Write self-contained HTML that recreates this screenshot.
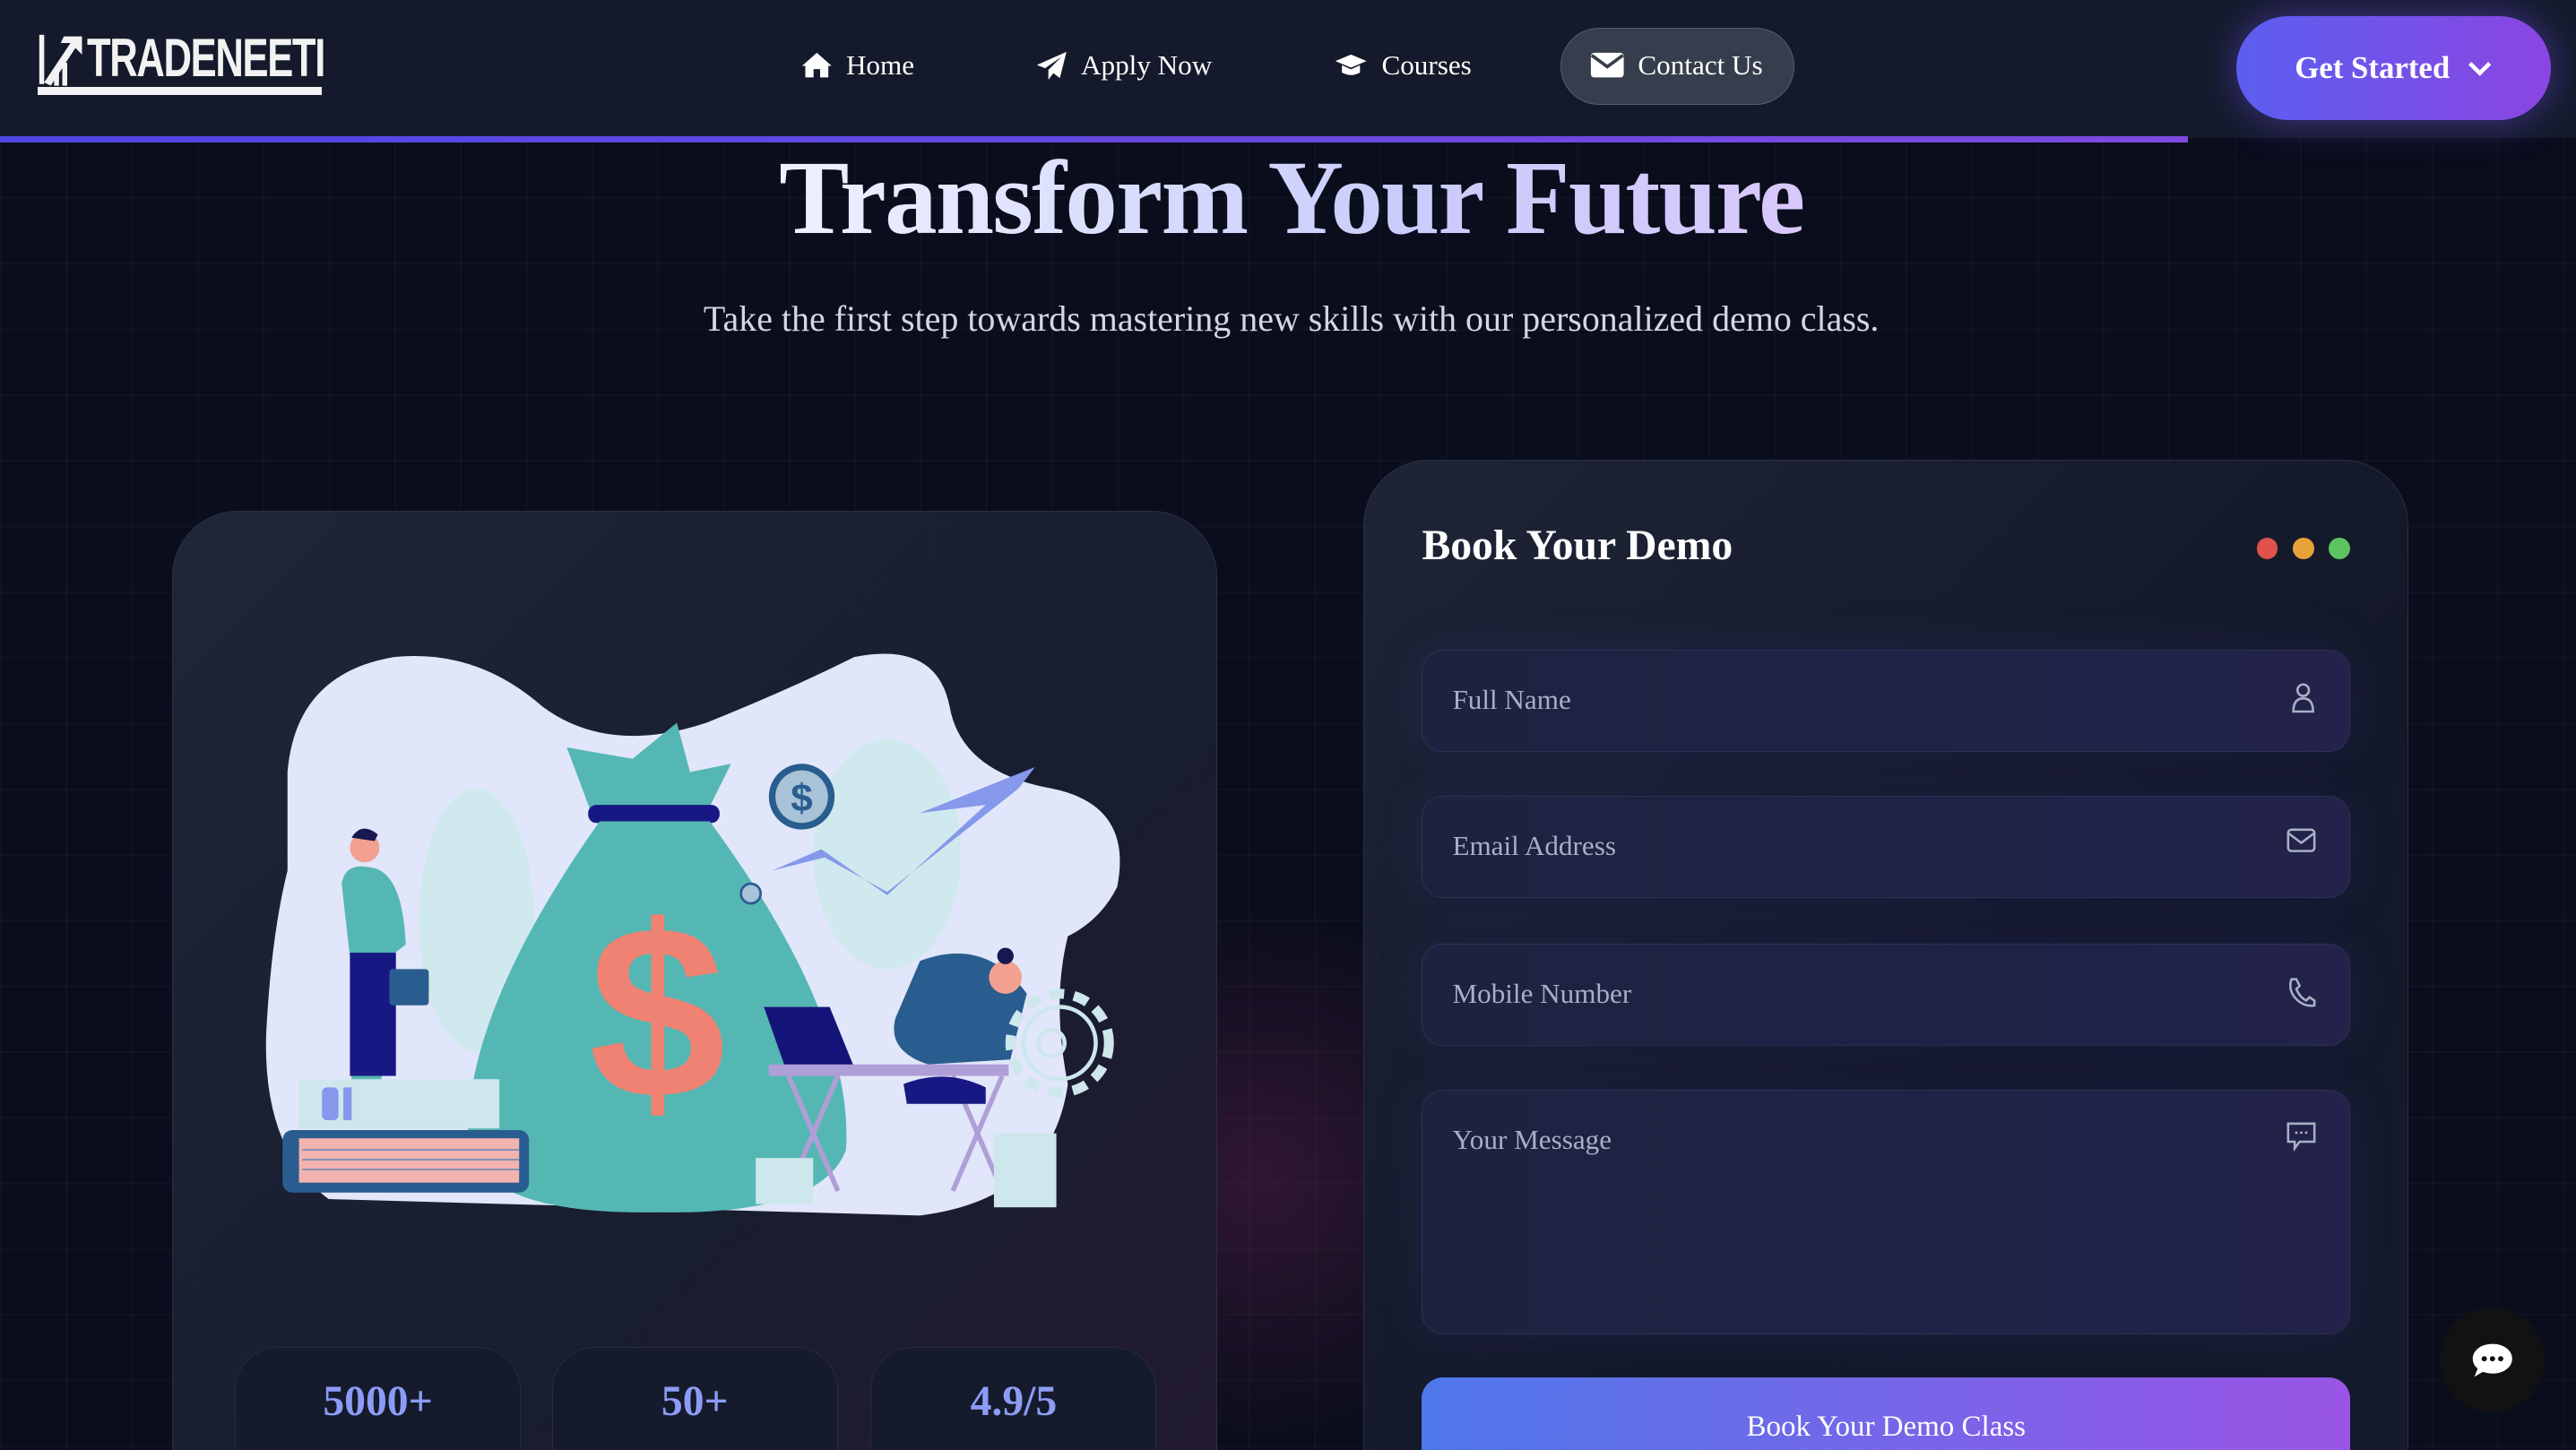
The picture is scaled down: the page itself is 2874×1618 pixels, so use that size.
<!DOCTYPE html>
<html><head><meta charset="utf-8">
<style>
html{margin:0;padding:0;width:2874px;height:1618px;overflow:hidden;}
body{margin:0;padding:0;width:1568px;height:883px;overflow:hidden;zoom:1.83291;background:#0a0d1c;font-family:"Liberation Serif",serif;position:relative;}
.grid{position:absolute;inset:0;background-image:linear-gradient(rgba(255,255,255,0.025) 1px,transparent 1px),linear-gradient(90deg,rgba(255,255,255,0.025) 1px,transparent 1px);background-size:40px 40px;}
.glow{position:absolute;left:600px;top:550px;width:333px;height:333px;border-radius:50%;background:radial-gradient(circle,rgba(120,40,90,0.35),transparent 70%);}
nav{position:absolute;left:0;top:0;width:1568px;height:84px;background:#141a2b;}
.bar{position:absolute;left:0;top:83px;width:1332px;height:4px;background:linear-gradient(90deg,#4f46e5,#7c4ae0);}
.logo{position:absolute;left:23px;top:20px;width:174px;height:38px;}
.logo span{position:absolute;left:30px;top:-4px;color:#f2f2f2;font-family:"Liberation Sans",sans-serif;font-weight:bold;font-size:33px;letter-spacing:-1px;transform:scaleX(0.72);transform-origin:left;}
.nv{position:absolute;top:30px;color:#fff;font-size:17px;display:flex;align-items:center;gap:8px;}
.pill{position:absolute;left:950px;top:17px;width:142px;height:47px;border-radius:24px;background:#363d4c;border:1px solid #565d6c;box-sizing:border-box;}
.gs{position:absolute;left:1361px;top:10px;width:192px;height:63px;border-radius:32px;background:linear-gradient(90deg,#5b5ff0,#8b45e2);color:#fff;font-weight:bold;font-size:19px;display:flex;align-items:center;justify-content:center;gap:10px;box-shadow:0 0 24px rgba(110,80,240,0.5);}
h1{position:absolute;left:0;width:1572px;top:84px;margin:0;text-align:center;font-size:64px;font-weight:bold;letter-spacing:-1px;}
h1 span{background:linear-gradient(90deg,#eef1ff,#c9cdfb 60%,#d8c8fb);-webkit-background-clip:text;color:transparent;}
.sub{position:absolute;left:0;width:1572px;top:181px;text-align:center;color:#d4d7e2;font-size:21.8px;}
.lc{position:absolute;left:105px;top:311px;width:636px;height:572px;border-radius:40px 40px 0 0;background:linear-gradient(135deg,#1f2638,#181d30 60%,#221a33);border:1px solid #2a3044;border-bottom:none;box-sizing:border-box;}
.st{position:absolute;top:820px;width:174px;height:63px;border-radius:26px 26px 0 0;background:#151b2c;border:1px solid #262c3d;border-bottom:none;box-sizing:border-box;text-align:center;color:#8c9cf6;font-weight:bold;font-size:26px;padding-top:18px;}
.rc{position:absolute;left:830px;top:280px;width:636px;height:603px;border-radius:40px 40px 0 0;background:linear-gradient(135deg,#1e2536,#131829 60%,#141a2c);border:1px solid #2a3044;border-bottom:none;box-sizing:border-box;overflow:hidden;}
.rc h2{position:absolute;left:35px;top:37px;margin:0;color:#fff;font-size:26px;font-weight:bold;}
.dot{position:absolute;top:47px;width:13px;height:13px;border-radius:50%;}
.in{position:absolute;left:35px;width:565px;height:62px;border-radius:13px;background:linear-gradient(90deg,#1c2340,#22224a);border:1px solid #2c3352;box-sizing:border-box;color:#a8b0c4;font-size:17px;padding:20px 0 0 18px;box-shadow:0 0 30px rgba(80,70,200,0.15);}
.in svg{position:absolute;right:20px;top:19px;}
.btn{position:absolute;left:35px;top:558px;width:565px;height:60px;border-radius:13px;background:linear-gradient(90deg,#4f78ea,#9a55e6);color:#fff;font-size:18px;text-align:center;padding-top:20px;box-sizing:border-box;}
.chat{position:absolute;left:1485px;top:796px;width:64px;height:64px;border-radius:50%;background:#121212;}
</style></head><body>
<div class="grid"></div><div class="glow"></div>
<nav>
<div class="logo"><svg width="30" height="38" viewBox="0 0 30 38"><rect x="1" y="1" width="3" height="30" fill="#f2f2f2"/><path d="M4 30 L20 6 L14 6 L16 2 L27 2 L27 13 L23 9 L8 32 Z" fill="#f2f2f2"/><rect x="10" y="22" width="3" height="10" fill="#f2f2f2"/><rect x="15" y="18" width="3" height="14" fill="#f2f2f2"/></svg><span>TRADENEETI</span><div style="position:absolute;left:0;top:33px;width:173px;height:5px;background:#f2f2f2"></div></div>
<div class="nv" style="left:487px"><svg width="20" height="17" viewBox="0 0 20 17"><path d="M10 1 L1 9 L3 9 L3 16 L8 16 L8 11 L12 11 L12 16 L17 16 L17 9 L19 9 Z" fill="#fff"/></svg>Home</div>
<div class="nv" style="left:630px"><svg width="20" height="19" viewBox="0 0 20 19"><path d="M19 1 L1 9 L6 11 L16 4 L8 12 L8 18 L11 14 L15 17 Z" fill="#fff"/></svg>Apply Now</div>
<div class="nv" style="left:812px"><svg width="21" height="15" viewBox="0 0 21 15"><path d="M10.5 1 L20 5 L10.5 9 L1 5 Z M5 7.5 L5 12 Q10.5 15 16 12 L16 7.5 L10.5 10 Z" fill="#fff"/></svg>Courses</div>
<div class="pill"></div>
<div class="nv" style="left:968px"><svg width="21" height="16" viewBox="0 0 21 16"><rect x="0.5" y="0.5" width="20" height="15" rx="2" fill="#fff"/><path d="M1 2 L10.5 9 L20 2" stroke="#363d4c" stroke-width="2" fill="none"/></svg>Contact Us</div>
<div class="gs">Get Started <svg width="16" height="10" viewBox="0 0 16 10"><path d="M2 2 L8 8 L14 2" stroke="#fff" stroke-width="2.5" fill="none"/></svg></div>
</nav>
<div class="bar"></div>
<h1><span>Transform Your Future</span></h1>
<div class="sub">Take the first step towards mastering new skills with our personalized demo class.</div>

<div class="lc"></div>
<svg style="position:absolute;left:0;top:0" width="1568" height="883">
<path d="M175 470 Q180 410 240 400 Q290 395 330 430 Q370 460 430 440 Q480 420 520 400 Q570 390 578 430 Q585 470 640 480 Q690 490 680 540 Q670 560 650 570 Q640 610 650 660 Q640 730 560 740 L200 730 Q160 700 162 630 Q165 570 175 530 Z" fill="#e1e6fa"/>
<ellipse cx="290" cy="560" rx="35" ry="80" fill="#d0e9ee"/>
<ellipse cx="540" cy="520" rx="45" ry="70" fill="#d0e9ee"/>
<path d="M345 455 L385 462 L412 440 L420 470 L445 465 L430 495 L360 495 Z" fill="#55b7b3"/>
<rect x="358" y="490" width="80" height="11" rx="5" fill="#181884"/>
<path d="M365 500 L432 500 Q520 620 515 700 Q500 740 400 738 Q300 740 285 700 Q280 620 365 500 Z" fill="#55b7b3"/>
<text x="400" y="668" text-anchor="middle" font-family="Liberation Sans,sans-serif" font-weight="bold" font-size="150" fill="#ef8272">$</text>
<circle cx="488" cy="485" r="20" fill="#2a5d8f"/><circle cx="488" cy="485" r="16" fill="#a8c2d8"/>
<text x="488" y="494" text-anchor="middle" font-family="Liberation Sans,sans-serif" font-weight="bold" font-size="24" fill="#2a5d8f">$</text>
<circle cx="457" cy="544" r="6" fill="#a8c2d8" stroke="#2a5d8f" stroke-width="1.5"/>
<path d="M470 530 L500 517 L540 545 L600 490 L560 495 L630 467 L620 480 L540 543 L502 522 Z" fill="#8598ec"/>
<path d="M208 538 Q210 525 225 528 Q245 530 247 575 L238 582 L232 660 L214 660 L213 583 Z" fill="#55b7b3"/>
<rect x="213" y="580" width="28" height="75" fill="#181884"/>
<circle cx="222" cy="516" r="9" fill="#f2a191"/><path d="M214 510 Q220 500 230 508 L228 512 Z" fill="#181850"/>
<rect x="237" y="590" width="24" height="22" rx="2" fill="#2a5d8f"/>
<rect x="182" y="657" width="122" height="30" fill="#cde7ec"/><rect x="196" y="662" width="10" height="20" rx="3" fill="#8598ec"/><rect x="209" y="662" width="5" height="20" fill="#8598ec"/>
<rect x="172" y="688" width="150" height="38" rx="6" fill="#2a5d8f"/><rect x="182" y="693" width="134" height="27" fill="#f3b3ae"/>
<g stroke="#7a90b8" stroke-width="1"><line x1="184" y1="700" x2="316" y2="700"/><line x1="184" y1="706" x2="316" y2="706"/><line x1="184" y1="712" x2="316" y2="712"/></g>
<path d="M465 613 L505 613 L520 650 L478 650 Z" fill="#141478"/>
<rect x="468" y="648" width="146" height="7" fill="#b09ed8"/>
<g stroke="#b09ed8" stroke-width="3"><line x1="480" y1="655" x2="510" y2="725"/><line x1="510" y1="655" x2="480" y2="725"/><line x1="580" y1="655" x2="610" y2="725"/><line x1="610" y1="655" x2="580" y2="725"/></g>
<path d="M560 585 Q600 570 625 605 L615 645 L565 648 Q540 640 545 620 Z" fill="#2a5d8f"/>
<circle cx="612" cy="595" r="10" fill="#f2a191"/><circle cx="612" cy="582" r="5" fill="#181850"/>
<path d="M550 660 Q575 650 600 662 L600 672 L552 672 Z" fill="#181884"/>
<circle cx="645" cy="635" r="30" fill="none" stroke="#cde7ec" stroke-width="6" stroke-dasharray="9 6"/><circle cx="645" cy="635" r="22" fill="none" stroke="#cde7ec" stroke-width="2.5"/><circle cx="640" cy="635" r="8" fill="none" stroke="#cde7ec" stroke-width="2.5"/>
<rect x="605" y="690" width="38" height="45" fill="#cde7ec"/><rect x="460" y="705" width="35" height="28" fill="#cde7ec"/>
</svg>
<div class="st" style="left:143px">5000+</div>
<div class="st" style="left:336px">50+</div>
<div class="st" style="left:530px">4.9/5</div>

<div class="rc">
<h2>Book Your Demo</h2>
<div class="dot" style="left:543px;background:#e0524a"></div><div class="dot" style="left:565px;background:#e8a23a"></div><div class="dot" style="left:587px;background:#5cc460"></div>
<div class="in" style="top:115px">Full Name<svg width="16" height="20" viewBox="0 0 16 20"><circle cx="8" cy="5" r="3.5" fill="none" stroke="#a8b0c4" stroke-width="1.4"/><path d="M2 18 Q2 10 8 10 Q14 10 14 18 Z" fill="none" stroke="#a8b0c4" stroke-width="1.4"/></svg></div>
<div class="in" style="top:204px">Email Address<svg width="18" height="16" viewBox="0 0 18 16"><rect x="1" y="1" width="16" height="13" rx="2" fill="none" stroke="#a8b0c4" stroke-width="1.4"/><path d="M1 3 L9 9 L17 3" fill="none" stroke="#a8b0c4" stroke-width="1.4"/></svg></div>
<div class="in" style="top:294px">Mobile Number<svg width="18" height="20" viewBox="0 0 18 20"><path d="M3 2 L6 2 L8 6 L6 8 Q8 13 12 15 L14 13 L17 15 L17 18 Q10 19 5 13 Q1 8 3 2 Z" fill="none" stroke="#a8b0c4" stroke-width="1.4"/></svg></div>
<div class="in" style="top:383px;height:149px">Your Message<svg width="18" height="18" viewBox="0 0 18 18"><path d="M1 1 L17 1 L17 12 L8 12 L5 16 L5 12 L1 12 Z" fill="none" stroke="#a8b0c4" stroke-width="1.4"/><circle cx="6" cy="6.5" r="0.8" fill="#a8b0c4"/><circle cx="9" cy="6.5" r="0.8" fill="#a8b0c4"/><circle cx="12" cy="6.5" r="0.8" fill="#a8b0c4"/></svg></div>
<div class="btn">Book Your Demo Class</div>
</div>
<div class="chat"><svg style="position:absolute;left:19px;top:20px" width="26" height="24" viewBox="0 0 26 24"><path d="M13 2 C20 2 25 6 25 11 C25 16 20 20 13 20 C11 20 9 19.5 7 19 L2 22 L4 17 C2 15.5 1 13.5 1 11 C1 6 6 2 13 2 Z" fill="#fff"/><circle cx="8" cy="11" r="1.6" fill="#121212"/><circle cx="13" cy="11" r="1.6" fill="#121212"/><circle cx="18" cy="11" r="1.6" fill="#121212"/></svg></div>
</body></html>
